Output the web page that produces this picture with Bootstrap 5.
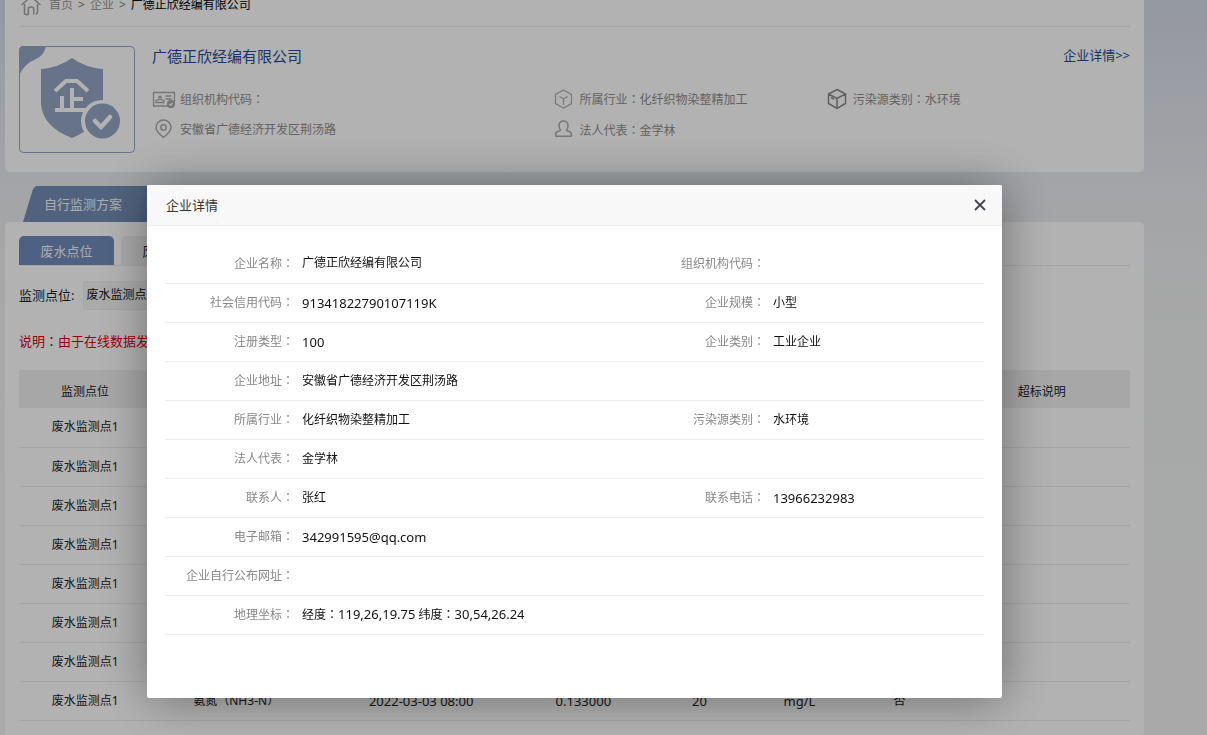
<!DOCTYPE html>
<html lang="zh-CN">
<head>
<meta charset="utf-8">
<meta name="viewport" content="width=device-width, initial-scale=1">
<title>企业详情</title>
<link href="https://cdn.jsdelivr.net/npm/bootstrap@5.3.0/dist/css/bootstrap.min.css" rel="stylesheet">
<style>
body{font-family:"Noto Sans","Noto Sans CJK SC",sans-serif;font-size:12px;line-height:20px;color:#222;height:100vh;background:linear-gradient(#d5dae6 0,#e9ebf0 180px,#f0f1f1 320px,#f3f3f3 735px) no-repeat #f3f3f3}
a{text-decoration:none}
.t13{font-size:13px}
.colon{font-family:"Noto Sans CJK TC",sans-serif}
.page-wrap{margin:-16px 63px 0 5px}
.panel{background:#fff;border-radius:5px;padding:0 14px}
.crumbs{height:43px;border-bottom:1px solid #eee;color:#777;gap:5px}
.crumbs a{color:#999}
.crumbs svg{margin-right:1px}
.company{padding:19px 0;gap:17px}
.logo-box{width:116px;height:107px}
.company h1{font-size:15px;line-height:20px;font-weight:400;color:#284a96;margin:0}
.detail-link{color:#284a96;font-size:13px;line-height:18px}
.facts{display:grid;grid-template-columns:402fr 272fr 303fr;grid-auto-rows:22px;row-gap:9px;margin-top:22px;color:#8e8e8e}
.facts svg{width:24px;height:22px;margin-right:4px;flex:none}
.facts .narrow svg{width:20px;margin-right:5px}
.facts .cube svg{margin-right:2px}
.monitor{table-layout:fixed;width:100%;text-align:center}
.main-tab{height:36px;width:300px;margin:14px 0 0 18px;padding:0 0 0 21px;border:0;color:#f4f6fb;background:linear-gradient(105deg,#748db5 0,#748db5 115px,#6d86b0 125px);clip-path:polygon(0 100%,10px 3px,13px 0,100% 0,100% 100%);text-align:left}
.sub-tabs{border-bottom:1px solid #eee;gap:7px;margin-top:14px}
.sub-tabs button{border:0;height:29px;width:95px;padding:0;border-radius:5px 5px 0 0;background:#f2f2f2;color:#333}
.sub-tabs button.on{background:#728bba;color:#f4f6fb}
.point-pick{height:28px;margin-top:15px;gap:9px}
.point-pick select{appearance:none;border:1px solid #eee;border-radius:4px;background:#f5f5f5;height:29px;width:170px;padding:0 2px;color:#111}
.notice{color:#d9000f;margin:22px 0 19px}
.monitor th{font-weight:400;background:#f0f0f0;height:38px;padding-top:6px}
.monitor td{height:39px;border-bottom:1px solid #eee;padding:0}
.modal-backdrop{--bs-backdrop-opacity:.3}
.detail-modal{padding-right:58px}
.detail-modal .modal-dialog{max-width:855px;margin:185px auto 0}
.detail-modal .modal-content{border:0;border-radius:2px;box-shadow:1px 1px 50px rgba(0,0,0,.4);min-height:513px}
.detail-modal .modal-header{background:#f8f8f8;height:41px;padding:0 15px 0 19px;border-color:#eee;border-radius:2px 2px 0 0}
.detail-modal h2{font-size:13px;line-height:20px;font-weight:400;color:#333;margin:0}
.close-x{border:0;background:none;padding:0;width:15px;height:20px;display:flex;align-items:center;justify-content:center}
.detail-modal .modal-body{padding:18px}
.detail{table-layout:fixed;width:100%;color:#111}
.detail tr{border-bottom:1px solid #eee;height:39px}
.detail th{font-weight:400;color:#888;text-align:right;padding:0 2px 0 0}
.detail td{padding:0 0 0 6px}
</style>
</head>
<body class="modal-open overflow-hidden">
<div class="page-wrap">
  <section class="panel">
    <nav class="crumbs d-flex align-items-center">
      <svg width="24" height="22" viewBox="0 0 24 22" fill="none" stroke="#a5a5a5" stroke-width="1.5"><path d="M2.500 11 12 2.500 21.500 11M5.500 10v9.500q0 1 1 1h2.800v-5.500q0-2 2.700-2t2.700 2v5.500M18.500 10v8.500l-1.500 2"/></svg>
      <a href="#">首页</a><span>&gt;</span><a href="#">企业</a><span>&gt;</span><span class="text-black">广德正欣经编有限公司</span>
    </nav>
    <div class="company d-flex">
      <svg class="logo-box flex-shrink-0" viewBox="0 0 116 107">
        <rect x=".5" y=".5" width="115" height="106" rx="4" fill="#fff" stroke="#92a5c3"/>
        <path fill="#92a5c3" d="M0 30V5Q0 0 5 0H27C24 12 18 12 11 16Q3 22 0 30Z"/>
        <path fill="#92a5c3" d="M53 12Q67 22 84 23V58Q82 80 53 92Q24 81 22 58V23Q39 22 53 12Z"/>
        <path d="M36 45 47 35H58L69 45M53 42V63M43 50V63M53 53H64M36 64H70" fill="none" stroke="#fff" stroke-width="4"/>
        <circle cx="83" cy="75" r="21" fill="#fff"/><circle cx="83.500" cy="75" r="17.500" fill="#92a5c3"/>
        <path d="M76 75 82 81 91 71" fill="none" stroke="#fff" stroke-width="4.500" stroke-linecap="round"/>
      </svg>
      <div class="flex-grow-1">
        <div class="d-flex justify-content-between">
          <h1>广德正欣经编有限公司</h1>
          <a class="detail-link" href="#">企业详情&gt;&gt;</a>
        </div>
        <div class="facts">
          <div class="d-flex align-items-center"><svg viewBox="0 0 24 22" fill="none" stroke="#aaa" stroke-width="1.300"><path d="M17 18H1.500V4.500h21V14"/><path d="M4 14.500v-2l3-1V8.500h2v3l3 1v2zM13.500 8h6M13.500 11h6"/><circle cx="19" cy="16" r="3.500" fill="#aaa"/><path stroke="#fff" d="m17.500 16 1.200 1.200 2-2.200"/></svg><span>组织机构代码<span class="colon" lang="zh-Hant">：</span></span></div>
          <div class="narrow d-flex align-items-center"><svg viewBox="0 0 20 22" fill="none" stroke="#b2b2b2" stroke-width="1.300"><path d="m9.500 2 8 4.500v9l-8 4.500-8-4.500v-9zM9.500 17v-6L5.500 8.500M9.500 11l4-2.500"/></svg><span>所属行业<span class="colon" lang="zh-Hant">：</span>化纤织物染整精加工</span></div>
          <div class="cube d-flex align-items-center"><svg viewBox="0 0 24 22" fill="none" stroke="#888" stroke-width="1.500"><path d="M10 1.500 18.500 6v9.500L10 20.500 1.500 15.500V6zM1.500 6l8.500 4.500L18.500 6M10 10.500v10M4 9.500l3 1.700"/></svg><span>污染源类别<span class="colon" lang="zh-Hant">：</span>水环境</span></div>
          <div class="d-flex align-items-center"><svg viewBox="0 0 24 22" fill="none" stroke="#aaa" stroke-width="1.500"><path d="M11.500 18.500Q4 12.500 4 8.500a7.500 7.500 0 0 1 15 0Q19 12.500 11.500 18.500Z"/><circle cx="11.500" cy="8.500" r="2.700"/></svg><span>安徽省广德经济开发区荆汤路</span></div>
          <div class="narrow d-flex align-items-center"><svg viewBox="0 0 20 22" fill="none" stroke="#aaa" stroke-width="1.500"><path d="M6.500 11Q5 9.500 5 6.500C5 0.500 14 .5 14 6.500q0 3-1.500 4.500 0 1 3 1.500 2 .8 2 4 0 .8-1 .8H2.500q-1 0-1-.8 0-3.200 2-4 3-.5 3-1.500Z"/></svg><span>法人代表<span class="colon" lang="zh-Hant">：</span>金学林</span></div>
        </div>
      </div>
    </div>
  </section>

  <button class="main-tab t13 d-block" type="button">自行监测方案</button>
  <section class="panel overflow-hidden">
    <div class="sub-tabs d-flex t13">
      <button class="on" type="button">废水点位</button>
      <button type="button">废气点位</button>
    </div>
    <div class="point-pick d-flex align-items-center">
      <label class="t13" for="point">监测点位:</label>
      <select id="point"><option>废水监测点1</option></select>
    </div>
    <p class="notice t13">说明<span class="colon" lang="zh-Hant">：</span>由于在线数据发</p>
    <table class="monitor mb-3">
      <colgroup><col style="width:11.9%"><col style="width:15.3%"><col style="width:18%"><col style="width:11.2%"><col style="width:9.7%"><col style="width:8.3%"><col style="width:9.7%"><col></colgroup>
      <thead><tr><th>监测点位</th><th></th><th></th><th></th><th></th><th></th><th></th><th>超标说明</th></tr></thead>
      <tbody>
        <tr><td>废水监测点1</td><td colspan="7"></td></tr>
        <tr><td>废水监测点1</td><td colspan="7"></td></tr>
        <tr><td>废水监测点1</td><td colspan="7"></td></tr>
        <tr><td>废水监测点1</td><td colspan="7"></td></tr>
        <tr><td>废水监测点1</td><td colspan="7"></td></tr>
        <tr><td>废水监测点1</td><td colspan="7"></td></tr>
        <tr><td>废水监测点1</td><td colspan="7"></td></tr>
        <tr><td>废水监测点1</td><td>氨氮<span class="colon" lang="zh-Hant">（</span>NH3-N<span class="colon" lang="zh-Hant">）</span></td><td class="t13">2022-03-03 08:00</td><td class="t13">0.133000</td><td class="t13">20</td><td class="t13">mg/L</td><td>否</td><td></td></tr>
      </tbody>
    </table>
  </section>
</div>

<div class="modal-backdrop show"></div>
<div class="modal detail-modal d-block overflow-hidden" role="dialog" aria-modal="true" aria-labelledby="detailTitle">
  <div class="modal-dialog">
    <div class="modal-content">
      <div class="modal-header">
        <h2 id="detailTitle">企业详情</h2>
        <button class="close-x" type="button" aria-label="关闭"><svg width="12" height="12" viewBox="0 0 12 12" stroke="#445" stroke-width="1.800"><path d="m1 1 10 10M11 1 1 11"/></svg></button>
      </div>
      <div class="modal-body">
        <table class="detail">
          <colgroup><col style="width:16%"><col><col style="width:16%"><col style="width:26.5%"></colgroup>
          <tbody>
          <tr><th>企业名称<span class="colon" lang="zh-Hant">：</span></th><td>广德正欣经编有限公司</td><th>组织机构代码<span class="colon" lang="zh-Hant">：</span></th><td></td></tr>
          <tr><th>社会信用代码<span class="colon" lang="zh-Hant">：</span></th><td class="t13">91341822790107119K</td><th>企业规模<span class="colon" lang="zh-Hant">：</span></th><td>小型</td></tr>
          <tr><th>注册类型<span class="colon" lang="zh-Hant">：</span></th><td class="t13">100</td><th>企业类别<span class="colon" lang="zh-Hant">：</span></th><td>工业企业</td></tr>
          <tr><th>企业地址<span class="colon" lang="zh-Hant">：</span></th><td colspan="3">安徽省广德经济开发区荆汤路</td></tr>
          <tr><th>所属行业<span class="colon" lang="zh-Hant">：</span></th><td>化纤织物染整精加工</td><th>污染源类别<span class="colon" lang="zh-Hant">：</span></th><td>水环境</td></tr>
          <tr><th>法人代表<span class="colon" lang="zh-Hant">：</span></th><td colspan="3">金学林</td></tr>
          <tr><th>联系人<span class="colon" lang="zh-Hant">：</span></th><td>张红</td><th>联系电话<span class="colon" lang="zh-Hant">：</span></th><td class="t13">13966232983</td></tr>
          <tr><th>电子邮箱<span class="colon" lang="zh-Hant">：</span></th><td colspan="3" class="t13">342991595@qq.com</td></tr>
          <tr><th>企业自行公布网址<span class="colon" lang="zh-Hant">：</span></th><td colspan="3"></td></tr>
          <tr><th>地理坐标<span class="colon" lang="zh-Hant">：</span></th><td colspan="3">经度<span class="colon" lang="zh-Hant">：</span><span class="t13">119,26,19.75</span> 纬度<span class="colon" lang="zh-Hant">：</span><span class="t13">30,54,26.24</span></td></tr>
          </tbody>
        </table>
      </div>
    </div>
  </div>
</div>
<script src="https://cdn.jsdelivr.net/npm/bootstrap@5.3.0/dist/js/bootstrap.bundle.min.js"></script>
</body>
</html>
